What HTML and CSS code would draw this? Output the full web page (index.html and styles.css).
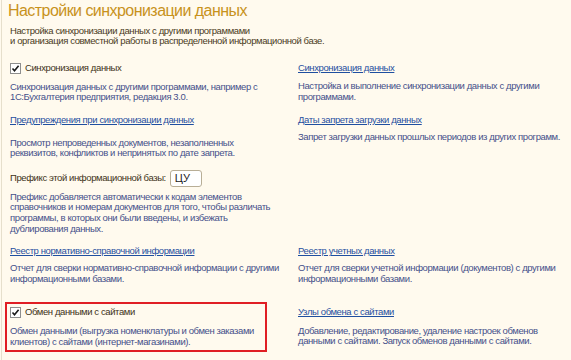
FILE: index.html
```html
<!DOCTYPE html>
<html lang="ru">
<head>
<meta charset="utf-8">
<link rel="stylesheet" href="styles.css">
</head>
<body>
<div class="form">
  <h1 class="title">Настройки синхронизации данных</h1>
  <p class="intro">Настройка синхронизации данных с другими программами<br>и организация совместной работы в распределенной информационной базе.</p>

  <div class="row r1">
    <div class="cell">
      <label class="check"><span class="box"><svg viewBox="0 0 9 9" width="9" height="9"><path d="M1.5 4.5 L3.5 6.8 L7.6 1.8" fill="none" stroke="#1a1a1a" stroke-width="1.6"/></svg></span>Синхронизация данных</label>
      <p class="desc dc">Синхронизация данных с другими программами, например с<br>1С:Бухгалтерия предприятия, редакция 3.0.</p>
    </div>
    <div class="cell">
      <a class="link" href="#">Синхронизация данных</a>
      <p class="desc dc">Настройка и выполнение синхронизации данных с другими<br>программами.</p>
    </div>
  </div>

  <div class="row r2">
    <div class="cell">
      <a class="link" href="#">Предупреждения при синхронизации данных</a>
      <p class="desc gap">Просмотр непроведенных документов, незаполненных<br>реквизитов, конфликтов и непринятых по дате запрета.</p>
      <div class="prefix"><span class="plabel">Префикс этой информационной базы:</span><span class="input">ЦУ</span></div>
      <p class="desc dp">Префикс добавляется автоматически к кодам элементов<br>справочников и номерам документов для того, чтобы различать<br>программы, в которых они были введены, и избежать<br>дублирования данных.</p>
    </div>
    <div class="cell">
      <a class="link" href="#">Даты запрета загрузки данных</a>
      <p class="desc">Запрет загрузки данных прошлых периодов из других программ.</p>
    </div>
  </div>

  <div class="row r3">
    <div class="cell">
      <a class="link" href="#">Реестр нормативно-справочной информации</a>
      <p class="desc">Отчет для сверки нормативно-справочной информации с другими<br>информационными базами.</p>
    </div>
    <div class="cell">
      <a class="link" href="#">Реестр учетных данных</a>
      <p class="desc">Отчет для сверки учетной информации (документов) с другими<br>информационными базами.</p>
    </div>
  </div>

  <div class="row r4">
    <div class="cell marked">
      <label class="check"><span class="box"><svg viewBox="0 0 9 9" width="9" height="9"><path d="M1.5 4.5 L3.5 6.8 L7.6 1.8" fill="none" stroke="#1a1a1a" stroke-width="1.6"/></svg></span>Обмен данными с сайтами</label>
      <p class="desc dc">Обмен данными (выгрузка номенклатуры и обмен заказами<br>клиентов) с сайтами (интернет-магазинами).</p>
    </div>
    <div class="cell r4right">
      <a class="link" href="#">Узлы обмена с сайтами</a>
      <p class="desc dc">Добавление, редактирование, удаление настроек обменов<br>данными с сайтами. Запуск обменов данными с сайтами.</p>
    </div>
  </div>
</div>
</body>
</html>
```
FILE: styles.css
```css
* { box-sizing: border-box; }
html, body {
  margin: 0;
  padding: 0;
  background: #fffaee;
}
body {
  width: 571px;
  height: 360px;
  overflow: hidden;
  font-family: "Liberation Sans", Arial, sans-serif;
  font-size: 9.5px;
  letter-spacing: -0.4px;
  line-height: 10.7px;
}
.form {
  height: 360px;
  border-left: 1px solid #e6dfcc;
  margin-left: 1px;
  padding: 0 0 0 8px;
}
.title {
  margin: 0 0 0 -2px;
  padding-top: 1px;
  font-weight: normal;
  font-size: 16px;
  letter-spacing: -0.55px;
  line-height: 20px;
  color: #c8921c;
  white-space: nowrap;
}
.intro {
  margin: 4.6px 0 0;
  color: #4a3a1c;
  white-space: nowrap;
}
.row {
  display: grid;
  grid-template-columns: 288px 1fr;
}
.r1 { margin-top: 15.5px; }
.r2 { margin-top: 12px; }
.r3 { margin-top: 12px; }
.r4 { margin-top: 18px; }
.cell { min-width: 0; }
.check {
  display: flex;
  align-items: center;
  gap: 4px;
  height: 11px;
  color: #3e3218;
}
.box {
  flex: none;
  width: 11px;
  height: 11px;
  border: 1px solid #8e8e8e;
  background: #fff;
  display: flex;
  align-items: center;
  justify-content: center;
}
.link {
  color: #1f4fa0;
  text-decoration: underline;
}
.desc {
  margin: 6px 0 0;
  color: #45508a;
  white-space: nowrap;
}
.dc { margin-top: 8px; }
.gap { margin-top: 12px; }
.dp { margin-top: 5px; }
.prefix {
  margin-top: 10.5px;
  display: flex;
  align-items: center;
  gap: 4px;
  height: 17px;
  color: #3e3218;
}
.input {
  width: 32px;
  height: 17px;
  border: 1px solid #b8ae96;
  border-radius: 3px;
  background: #fff;
  padding: 2px 4px;
  color: #222;
  font-size: 11px;
  letter-spacing: 0;
  line-height: 11px;
}
.marked {
  margin-left: -5px;
  padding: 2.5px 0 3px 3px;
  border: 2px solid #e01e24;
  width: 262px;
}
.r4right { padding-top: 4.6px; }
```
